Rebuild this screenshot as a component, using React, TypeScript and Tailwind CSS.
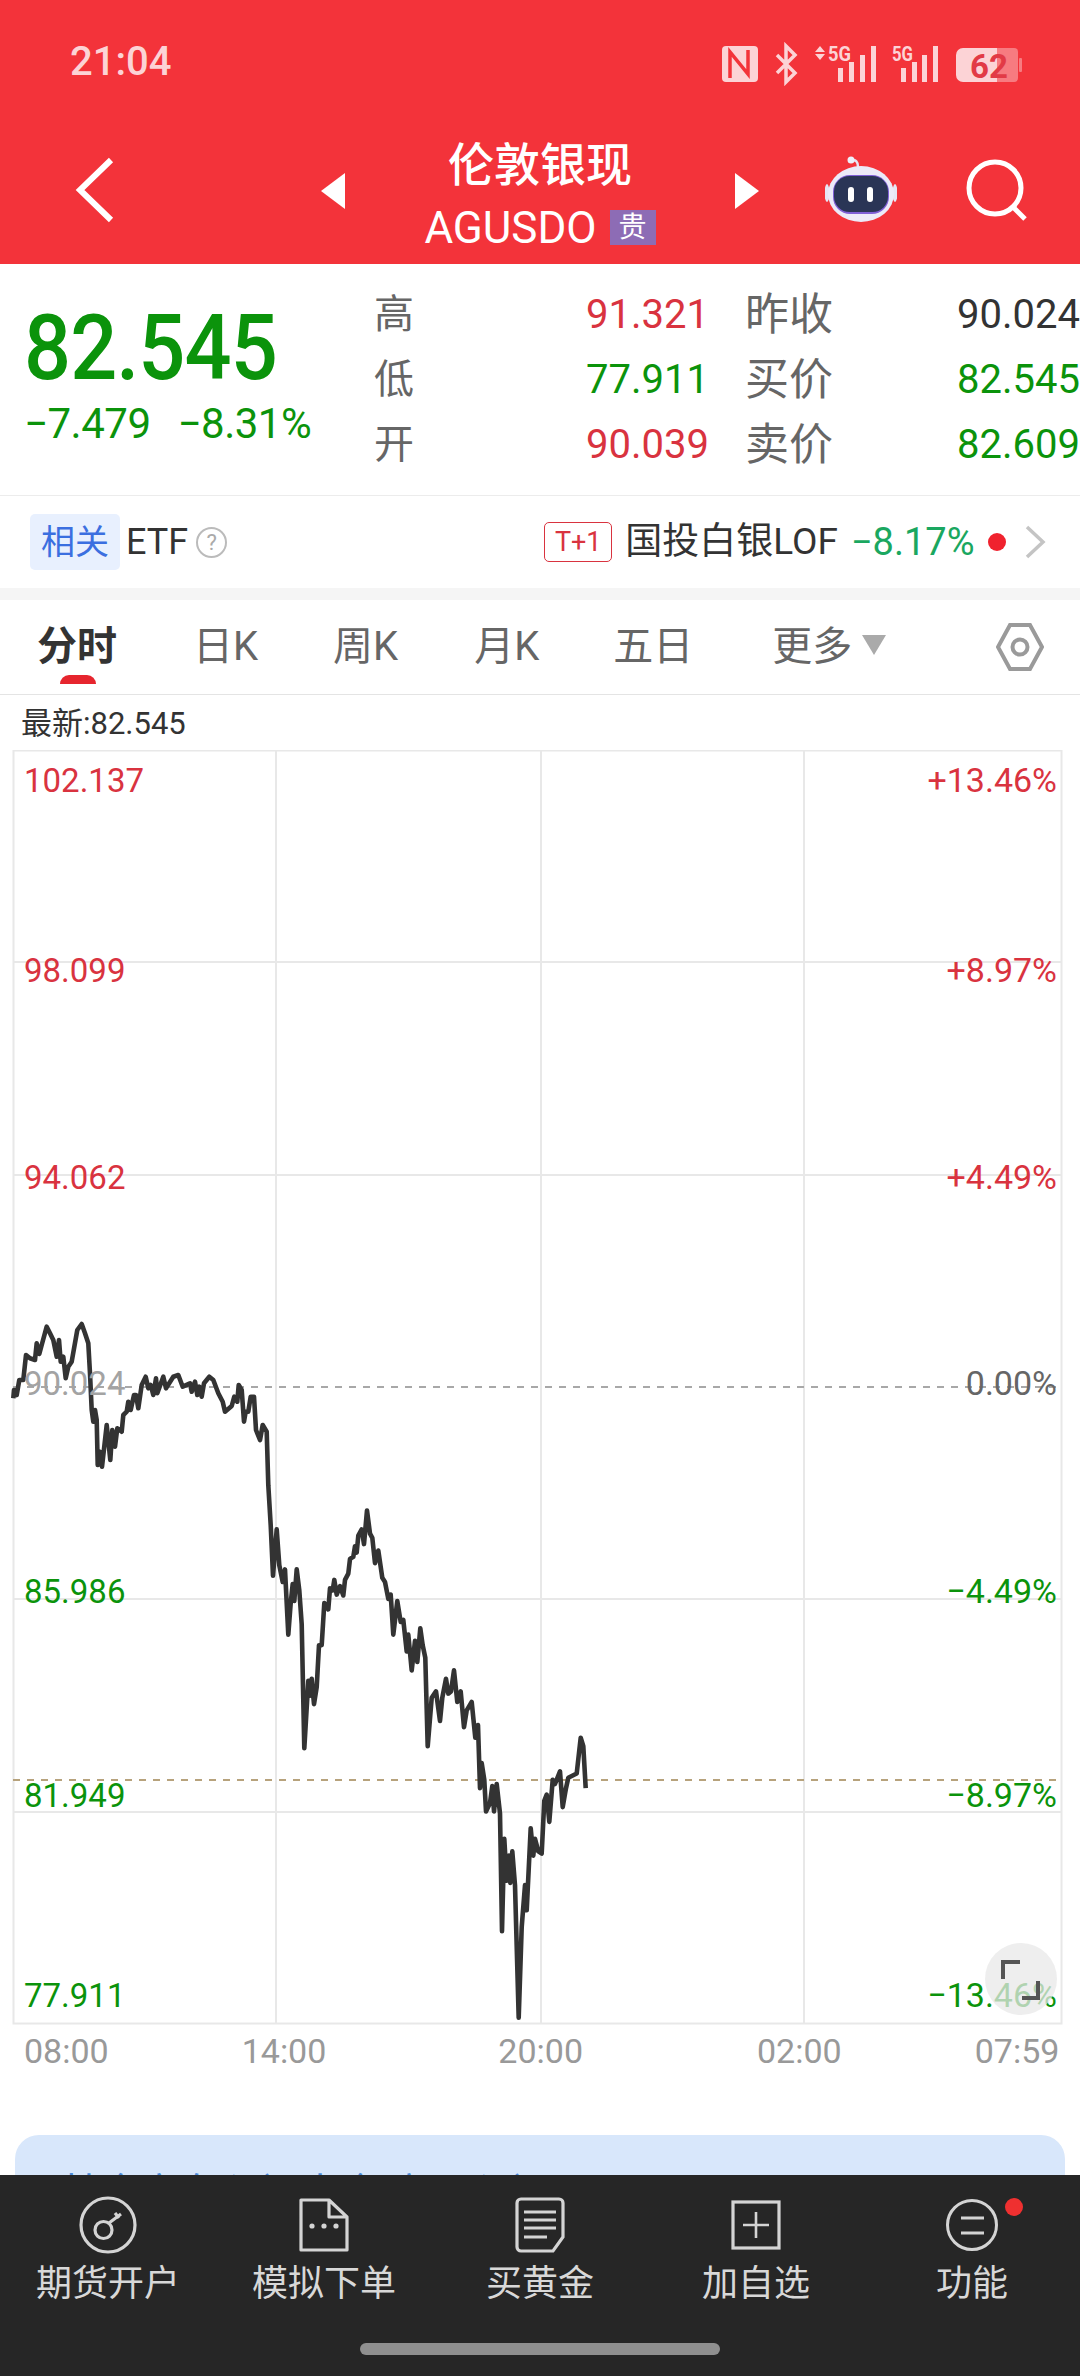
const zoomA: number[][] = [
  [40,355],[42,330],[50,345],[58,300],[70,300],[78,225],[90,235],[105,240],[110,190],[118,222],[125,195],[140,140],[150,160],[160,180],[170,230],[177,180],[182,245],[190,230],[197,295],[205,260],[215,245],[232,150],[245,132],[255,160],[265,190],[270,280],[275,390],[280,425],[285,390],[290,420],[293,555],[300,515],[306,560],[320,435],[331,540],[337,450],[345,500],[352,445],[365,455],[370,405],[380,395],[385,365],[392,390],[402,345],[408,345],[415,385],[425,315],[437,290],[445,325],[452,315],[460,345],[468,295],[472,340],[490,290],[498,325],[520,290],[535,285],[548,320],[570,310],[575,335],[585,305],[592,345],[598,320],[605,350],[612,310],[628,290],[640,300],[655,340],[668,365],[675,395],[695,378],[703,350],[712,365],[716,315],[725,330],[732,425],[737,395],[745,395],[752,350],[762,350],[768,450],[780,480],[788,435],[800,455],
];
const zoomB: number[][] = [
  [85,250],[92,345],[99,465],[110,355],[118,440],[128,480],[135,450],[145,605],[152,530],[158,485],[163,525],[170,450],[178,500],[185,580],[193,875],[205,715],[210,750],[215,710],[222,770],[230,730],[237,630],[245,630],[253,530],[265,545],[270,495],[278,500],[283,475],[290,510],[300,490],[310,512],[315,475],[325,460],[330,425],[340,420],[345,395],[350,410],[355,370],[365,355],[372,390],[381,310],[390,365],[397,375],[405,435],[415,405],[427,470],[435,480],[445,520],[452,510],[460,605],[472,525],[482,575],[490,570],[500,645],[505,605],[515,690],[525,620],[532,670],[541,590],[548,630],[556,660],[563,870],[575,755],[588,740],[600,810],[607,755],[618,710],[625,745],[633,740],[642,690],[652,765],[662,740],[672,825],[680,785],[695,765],[706,850],[714,820],[720,970],[725,910],[733,950],[738,1025],[750,1005],[757,965],[762,1025],[770,960],[780,1030],[786,1310],[793,1090],[800,1190],[807,1130],[811,1195],[817,1120],[825,1200],[836,1515],[845,1300],[855,1200],[860,1260],[872,1065],[880,1130],[885,1090],[895,1120],[905,1125],[913,1000],[920,985],[928,1050],[938,950],[945,960],[960,930],[968,1015],[978,970],[985,945],[1010,935],[1022,850],[1030,870],[1037,970],
];

const linePoints = [
  ...zoomA.map(([x, y]) => [x / 3, 1280 + y / 3]),
  ...zoomB.map(([x, y]) => [240 + x / 3, 1380 + y / 2.376]),
]
  .map(([x, y]) => `${x.toFixed(1)},${y.toFixed(1)}`)
  .join(" ");

const leftLabels = [
  { text: "102.137", className: "top-[11px] text-[#d9333f]" },
  { text: "98.099", className: "top-[201px] text-[#d9333f]" },
  { text: "94.062", className: "top-[408px] text-[#d9333f]" },
  { text: "90.024", className: "top-[614px] text-[#a3a3a3]" },
  { text: "85.986", className: "top-[822px] text-[#0b930b]" },
  { text: "81.949", className: "top-[1026px] text-[#0b930b]" },
  { text: "77.911", className: "top-[1226px] text-[#0b930b]" },
];

const rightLabels = [
  { text: "+13.46%", className: "top-[10px] text-[#d9333f]" },
  { text: "+8.97%", className: "top-[200px] text-[#d9333f]" },
  { text: "+4.49%", className: "top-[407px] text-[#d9333f]" },
  { text: "0.00%", className: "top-[613px] text-[#666666]" },
  { text: "−4.49%", className: "top-[821px] text-[#0b930b]" },
  { text: "−8.97%", className: "top-[1025px] text-[#0b930b]" },
  { text: "−13.46%", className: "top-[1225px] text-[#0b930b]" },
];

const quoteRows = [
  { l1: "高", v1: "91.321", c1: "text-[#d9333f]", l2: "昨收", v2: "90.024", c2: "text-[#333333]" },
  { l1: "低", v1: "77.911", c1: "text-[#0b930b]", l2: "买价", v2: "82.545", c2: "text-[#0b930b]" },
  { l1: "开", v1: "90.039", c1: "text-[#d9333f]", l2: "卖价", v2: "82.609", c2: "text-[#0b930b]" },
];

const tabs = [
  { text: "日K", className: "ml-[76px]" },
  { text: "周K", className: "ml-[75px]" },
  { text: "月K", className: "ml-[76px]" },
  { text: "五日", className: "ml-[74px]" },
  { text: "更多", className: "ml-[79px]" },
];

function StatusIcons() {
  return (
    <svg width="310" height="60" viewBox="722 34 310 60" fill="#fcd3d6">
      <rect x="722" y="46" width="36" height="36" rx="4" />
      <path d="M730 78V52l18 22V50" fill="none" stroke="#f3333a" strokeWidth="3.5" />
      <path d="M777 55l18 18-9 9V46l9 9-18 18" fill="none" stroke="#fcd3d6" strokeWidth="3.5" />
      <path d="M815 52l5-6 5 6zM815 54l5 6 5-6z" />
      <text x="828" y="61" fontSize="20" fontWeight="700" fontFamily="Roboto, sans-serif" textLength="23" lengthAdjust="spacingAndGlyphs">5G</text>
      <rect x="838" y="68" width="5" height="14" />
      <rect x="849" y="62" width="5" height="20" />
      <rect x="860" y="55" width="5" height="27" />
      <rect x="871" y="46" width="5" height="36" />
      <text x="892" y="61" fontSize="20" fontWeight="700" fontFamily="Roboto, sans-serif" textLength="21" lengthAdjust="spacingAndGlyphs">5G</text>
      <rect x="901" y="68" width="5" height="14" />
      <rect x="912" y="62" width="5" height="20" />
      <rect x="922" y="55" width="5" height="27" />
      <rect x="933" y="46" width="5" height="36" />
      <path d="M963 48h34v34h-34a7 7 0 0 1-7-7V55a7 7 0 0 1 7-7z" />
      <path d="M997 48h17a4 4 0 0 1 4 4v26a4 4 0 0 1-4 4h-17z" fillOpacity="0.45" />
      <rect x="1019" y="58" width="3" height="14" rx="1" fillOpacity="0.45" />
      <text x="970" y="78" fontSize="33" fontWeight="700" fontFamily="Roboto, sans-serif" fill="#e23a46">62</text>
    </svg>
  );
}

function RobotIcon() {
  return (
    <svg width="72" height="66" viewBox="825 156 72 66">
      <path d="M851 161c5-2 7 1 7 6" fill="none" stroke="#e6e4f4" strokeWidth="2.5" />
      <circle cx="851" cy="160" r="3.5" fill="#eef0fa" />
      <ellipse cx="827" cy="193" rx="2.5" ry="9" fill="#e6e6f4" />
      <ellipse cx="895" cy="193" rx="2.5" ry="9" fill="#e6e6f4" />
      <ellipse cx="861" cy="194" rx="33" ry="28" fill="#eceaf8" />
      <rect x="833" y="175" width="56" height="39" rx="17" fill="#7f5fd6" />
      <rect x="834" y="176" width="54" height="36" rx="15.5" fill="#2a3556" />
      <rect x="848" y="187" width="6" height="15" rx="3" fill="#ffffff" />
      <rect x="867" y="187" width="6" height="15" rx="3" fill="#ffffff" />
    </svg>
  );
}

function FuturesIcon() {
  return (
    <svg width="60" height="60" viewBox="0 0 60 60" fill="none" stroke="#d4d4d4" strokeWidth="3.2">
      <circle cx="30" cy="30" r="27" />
      <circle cx="25.5" cy="35" r="8.5" />
      <path d="M31 28l12-9M37 18l4 5" />
    </svg>
  );
}

function DocIcon() {
  return (
    <svg width="60" height="60" viewBox="0 0 60 60" fill="none" stroke="#d4d4d4" strokeWidth="3.2">
      <path d="M7 5h28l18 17v33H7zM35 5v17h18" strokeLinejoin="round" />
      <circle cx="18" cy="31" r="2.6" fill="#d4d4d4" stroke="none" />
      <circle cx="30" cy="31" r="2.6" fill="#d4d4d4" stroke="none" />
      <circle cx="42" cy="31" r="2.6" fill="#d4d4d4" stroke="none" />
    </svg>
  );
}

function NotesIcon() {
  return (
    <svg width="60" height="60" viewBox="0 0 60 60" fill="none" stroke="#d4d4d4" strokeWidth="3.2">
      <path d="M11 4h38a4 4 0 0 1 4 4v34l-10 14H11a4 4 0 0 1-4-4V8a4 4 0 0 1 4-4z" />
      <path d="M14 17h32M14 25h32M14 33h32M14 42h23" />
    </svg>
  );
}

function AddIcon() {
  return (
    <svg width="60" height="60" viewBox="0 0 60 60" fill="none" stroke="#d4d4d4">
      <rect x="7" y="7" width="46" height="46" strokeWidth="3.2" />
      <path d="M17 30h26M30 17v26" strokeWidth="2.6" />
    </svg>
  );
}

function MenuIcon() {
  return (
    <svg width="60" height="60" viewBox="0 0 60 60" fill="none" stroke="#d4d4d4" strokeWidth="3">
      <circle cx="30" cy="30" r="24.5" />
      <path d="M19 23h23M19 38h23" />
    </svg>
  );
}

const navItems = [
  { label: "期货开户", icon: <FuturesIcon /> },
  { label: "模拟下单", icon: <DocIcon /> },
  { label: "买黄金", icon: <NotesIcon /> },
  { label: "加自选", icon: <AddIcon /> },
  { label: "功能", icon: <MenuIcon />, dot: true },
];

export default function App() {
  return (
    <div className="w-[1080px] h-[2376px] flex flex-col overflow-hidden bg-white font-['Roboto','Noto_Sans_CJK_SC',sans-serif]">
      <header className="h-[264px] shrink-0 bg-[#f3333a] text-white">
        <div className="h-[124px] flex items-center justify-between pl-[70px] pr-[48px]">
          <span className="text-[40px] font-medium text-[#fcd3d6]">21:04</span>
          <div className="mt-[4px]">
            <StatusIcons />
          </div>
        </div>
        <div className="h-[140px] flex items-center">
          <svg width="40" height="66" viewBox="0 0 40 66" fill="none" stroke="#ffffff" strokeWidth="6" className="ml-[75px] mb-[8px]">
            <path d="M36 3L5 33l31 30" />
          </svg>
          <svg width="24" height="36" viewBox="0 0 24 36" fill="#ffffff" className="ml-[206px] mb-[6px]">
            <path d="M24 0v36L0 18z" />
          </svg>
          <div className="w-[390px] flex flex-col items-center pt-[5px]">
            <div className="text-[46px] leading-[60px] font-medium">伦敦银现</div>
            <div className="flex items-center h-[46px] mt-[10px] mb-[8px]">
              <span className="text-[44px] leading-[46px]">AGUSDO</span>
              <span className="ml-[13px] w-[46px] h-[35px] bg-[#8d6cb5] flex items-center justify-center text-[28px] leading-none">贵</span>
            </div>
          </div>
          <svg width="24" height="36" viewBox="0 0 24 36" fill="#ffffff" className="mb-[6px]">
            <path d="M0 0v36l24-18z" />
          </svg>
          <div className="ml-[66px] mb-[10px]">
            <RobotIcon />
          </div>
          <svg width="64" height="62" viewBox="0 0 64 62" fill="none" stroke="#ffffff" strokeWidth="5" className="ml-[69px] mb-[8px]">
            <circle cx="29" cy="29" r="26" />
            <path d="M47 48l12 12" />
          </svg>
        </div>
      </header>

      <main className="flex-1 overflow-hidden">
        <section className="h-[231px] flex">
          <div className="w-[374px] shrink-0 pl-[24px] pt-[37px]">
            <div className="text-[90px] leading-[96px] font-medium text-[#0b930b] tracking-[-1px] h-[96px] whitespace-nowrap origin-left scale-x-[0.92]">82.545</div>
            <div className="mt-[2px] h-[50px] flex items-center gap-[27px] text-[42px] leading-[50px] text-[#0b930b] tracking-[-0.5px] whitespace-nowrap">
              <span>−7.479</span>
              <span>−8.31%</span>
            </div>
          </div>
          <div className="pt-[18px]">
            {quoteRows.map((row) => (
              <div key={row.l1} className="h-[65px] flex items-center whitespace-nowrap">
                <div className="w-[335px] flex items-center justify-between">
                  <span className="text-[40px] text-[#666666]">{row.l1}</span>
                  <span className={`text-[40px] ${row.c1}`}>{row.v1}</span>
                </div>
                <span className="ml-[36px] w-[212px] text-[44px] text-[#666666]">{row.l2}</span>
                <span className={`text-[40px] ${row.c2}`}>{row.v2}</span>
              </div>
            ))}
          </div>
        </section>

        <section className="h-[93px] border-t border-[#ececec] flex items-center pl-[30px]">
          <span className="w-[90px] h-[56px] rounded-[5px] bg-[#e8f0fe] text-[#3b6fe0] text-[34px] flex items-center justify-center">相关</span>
          <span className="ml-[6px] text-[36px] text-[#333333]">ETF</span>
          <span className="ml-[8px] w-[31px] h-[31px] rounded-full border-2 border-[#bbbbbb] text-[#aaaaaa] text-[22px] flex items-center justify-center">?</span>
          <span className="ml-[317px] w-[68px] h-[40px] rounded-[5px] border border-[#d9333f] text-[#d9333f] text-[27px] flex items-center justify-center">T+1</span>
          <span className="ml-[13px] text-[37px] text-[#333333] whitespace-nowrap">国投白银LOF</span>
          <span className="ml-[13px] text-[38px] text-[#1aa760] whitespace-nowrap">−8.17%</span>
          <span className="ml-[13px] w-[18px] h-[18px] rounded-full bg-[#f0222e]" />
          <svg width="24" height="34" viewBox="0 0 24 34" fill="none" stroke="#c4c4c4" strokeWidth="3.5" className="ml-[17px]">
            <path d="M4 2l16 15L4 32" />
          </svg>
        </section>
        <div className="h-[12px] bg-[#f5f5f5]" />

        <nav className="h-[95px] border-b border-[#e4e4e4] flex items-center pl-[37px]">
          <span className="relative text-[40px] font-bold text-[#333333]">
            分时
            <span className="absolute left-[23px] top-[58px] w-[36px] h-[9px] rounded-t-full bg-[#e6252e]" />
          </span>
          {tabs.map((tab) => (
            <span key={tab.text} className={`text-[40px] text-[#666666] ${tab.className}`}>
              {tab.text}
            </span>
          ))}
          <svg width="24" height="20" viewBox="0 0 24 20" fill="#aaaaaa" className="ml-[10px] mb-[4px]">
            <path d="M0 0h24L12 20z" />
          </svg>
          <svg width="48" height="50" viewBox="0 0 48 50" fill="none" stroke="#9a9a9a" strokeWidth="4" className="ml-[110px]">
            <path d="M14 3h20l12 22-12 22H14L2 25z" />
            <circle cx="24" cy="25" r="7.5" />
          </svg>
        </nav>

        <div className="h-[55px] pl-[21px] pt-[4px] flex items-center text-[31px] text-[#333333]">最新:82.545</div>

        <div className="relative h-[1275px]">
          <svg width="1080" height="1275" viewBox="0 750 1080 1275" fill="none" className="absolute left-0 top-0">
            <rect x="13.5" y="750.5" width="1048" height="1273" stroke="#e8e8e8" strokeWidth="2" />
            <path d="M276 750V2024M541 750V2024M804 750V2024" stroke="#e8e8e8" strokeWidth="2" />
            <path d="M13 962H1062M13 1175H1062M13 1599H1062M13 1812H1062" stroke="#e8e8e8" strokeWidth="2" />
            <path d="M13 1387H1062" stroke="#a8a8a8" strokeWidth="2" strokeDasharray="7 7" />
            <path d="M13 1780H1062" stroke="#b7a27c" strokeWidth="2" strokeDasharray="7 7" />
            <polyline points={linePoints} stroke="#333333" strokeWidth="4.6" strokeLinejoin="round" />
          </svg>
          {leftLabels.map((label) => (
            <span key={label.text} className={`absolute left-[24px] h-[40px] leading-[40px] text-[33px] ${label.className}`}>
              {label.text}
            </span>
          ))}
          {rightLabels.map((label) => (
            <span key={label.text} className={`absolute right-[23px] h-[40px] leading-[40px] text-[34px] ${label.className}`}>
              {label.text}
            </span>
          ))}
          <div className="absolute left-[985px] top-[1193px] w-[72px] h-[72px] rounded-full bg-[#e8e8e8]/75 flex items-center justify-center">
            <svg width="72" height="72" viewBox="0 0 72 72" fill="none" stroke="#555555" strokeWidth="4">
              <path d="M18 36V19h17M53 38v17H37" />
            </svg>
          </div>
        </div>

        <div className="h-[52px] flex items-center pl-[24px] text-[34px] text-[#999999]">
          <span>08:00</span>
          <span className="ml-[133px]">14:00</span>
          <span className="ml-[172px]">20:00</span>
          <span className="ml-[174px]">02:00</span>
          <span className="ml-[133px]">07:59</span>
        </div>

        <div className="mx-[15px] mt-[58px] h-[100px] rounded-[24px] bg-[#d8e7fb] pt-[34px] pl-[45px] flex text-[40px] leading-[50px] text-[#4a8ad8] whitespace-nowrap">
          基金定存入门大全 立即入门
          <span className="ml-[430px]">»</span>
        </div>
      </main>

      <footer className="h-[201px] shrink-0 bg-[#262626]">
        <div className="grid grid-cols-5 pt-[20px]">
          {navItems.map((item) => (
            <div key={item.label} className="relative flex flex-col items-center">
              {item.icon}
              <span className="mt-[4px] h-[50px] leading-[50px] text-[36px] text-[#d8d8d8]">{item.label}</span>
              {item.dot && <span className="absolute left-[141px] top-[3px] w-[18px] h-[18px] rounded-full bg-[#ef3030]" />}
            </div>
          ))}
        </div>
        <div className="w-[360px] h-[12px] mx-auto mt-[34px] rounded-full bg-[#8f8f8f]" />
      </footer>
    </div>
  );
}
